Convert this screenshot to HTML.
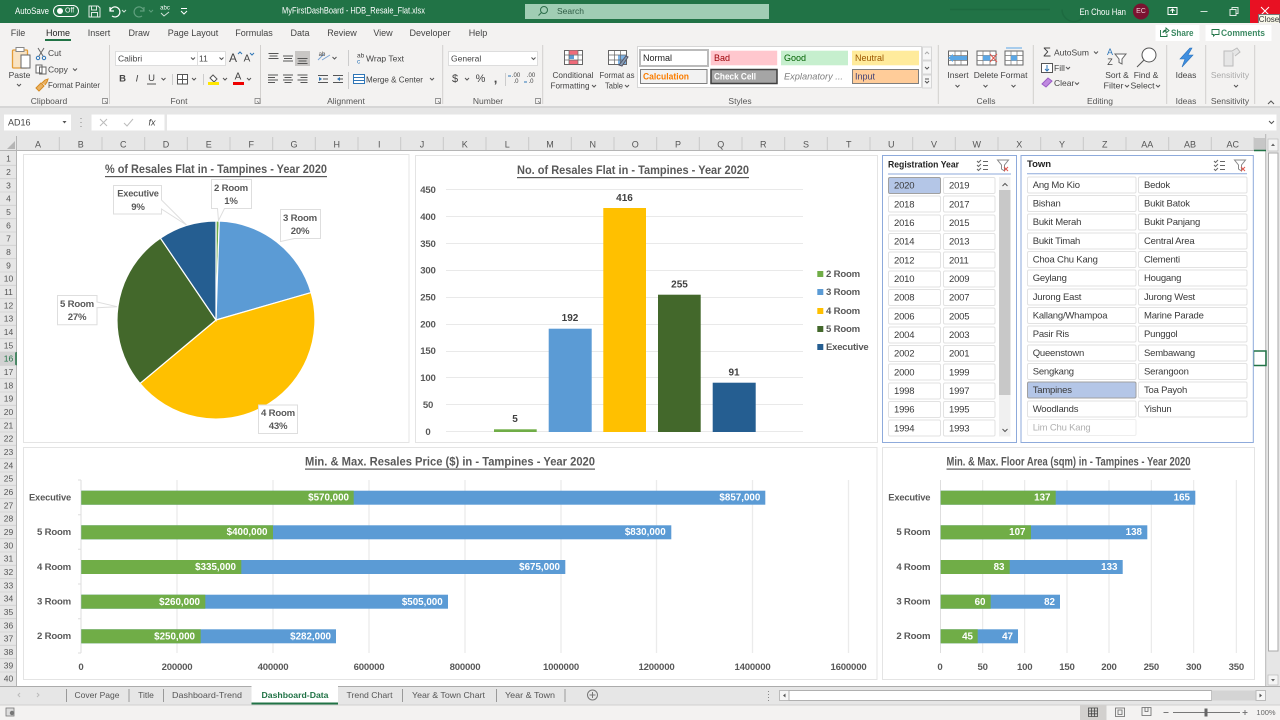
<!DOCTYPE html>
<html lang="en"><head><meta charset="utf-8"><title>MyFirstDashBoard - HDB_Resale_Flat.xlsx</title>
<style>
html,body{margin:0;padding:0;width:1280px;height:720px;overflow:hidden;background:#fff}
svg{display:block}
text{font-family:"Liberation Sans",sans-serif;dominant-baseline:central;font-size:8.5px;fill:#444}
.m{text-anchor:middle}.e{text-anchor:end}
.w{fill:#fff}.b{font-weight:bold}
.t{font-size:12px;font-weight:bold;fill:#595959;text-decoration:underline;text-anchor:middle}
.c{font-size:9.6px;font-weight:bold;fill:#595959;letter-spacing:-.2px;transform:translateY(.6px)}
.v{font-size:10px;font-weight:bold;fill:#404040;text-anchor:middle;transform:translateY(.6px)}
.l{font-size:9.8px;font-weight:bold;fill:#fff;text-anchor:end;transform:translateY(.6px)}
.s{font-size:9.5px;fill:#3a3a3a;letter-spacing:-.2px;transform:translateY(.6px)}
.h{font-size:9px;fill:#555;text-anchor:middle;transform:translateY(.5px)}
.r{font-size:8.5px;fill:#555;text-anchor:middle}
.ic{fill:none;stroke:#555;stroke-width:1}
.sb{fill:#fff;stroke:#e2e2e2;stroke-width:1}
</style></head><body>
<svg width="1280" height="720" viewBox="0 0 1280 720" xmlns="http://www.w3.org/2000/svg">
<!-- title bar -->
<rect width="1280" height="23" fill="#217346"/>
<path d="M950 9.500H1050M1062 9.500a12 12 0 1 0 24 0" fill="none" stroke="#1d6a40" stroke-width="1.500"/>
<text x="15" y="11" class="w" style="font-size:9px" textLength="34" lengthAdjust="spacingAndGlyphs">AutoSave</text>
<rect x="53.500" y="5.500" width="25" height="11" rx="5.500" fill="none" stroke="#fff"/>
<circle cx="60" cy="11" r="3" fill="#fff"/>
<text x="65" y="11" class="w" style="font-size:7px">Off</text>
<path d="M89 6h9l2 2v9H89zM91.500 6v4h5V6M91.500 17v-4.500h6V17" fill="none" stroke="#fff" opacity=".85"/>
<path d="M110 7v4h4M110 11a5 5 0 1 1 2 5" fill="none" stroke="#fff" stroke-width="1.200"/>
<path d="M122 10l2 2 2-2" fill="none" stroke="#fff" opacity=".8"/>
<path d="M144 7v4h-4M144 11a5 5 0 1 0-2 5" fill="none" stroke="#5f9f7d" stroke-width="1.200"/>
<path d="M149 10l2 2 2-2" fill="none" stroke="#5f9f7d"/>
<text x="165" y="8.500" class="w m" style="font-size:6px">abc</text>
<path d="M161 13l3 3 5-4" fill="none" stroke="#fff" opacity=".8"/>
<path d="M181 8.500h6M181 11l3 3 3-3" fill="none" stroke="#fff"/>
<text x="353.500" y="10.500" class="w m" style="font-size:8.800px" textLength="143" lengthAdjust="spacingAndGlyphs">MyFirstDashBoard - HDB_Resale_Flat.xlsx</text>
<rect x="525" y="4" width="244" height="15" fill="#a0cdb4"/>
<circle cx="544" cy="10" r="3.500" fill="none" stroke="#2c6e4a"/><path d="M541.500 12.500l-3 3" stroke="#2c6e4a"/>
<text x="557" y="11" style="font-size:8.500px;fill:#2e5b44">Search</text>
<text x="1079.500" y="12" class="w" style="font-size:8.800px" textLength="46.500" lengthAdjust="spacingAndGlyphs">En Chou Han</text>
<circle cx="1141" cy="11.500" r="8" fill="#7a1230"/><text x="1141" y="11.500" class="m" style="font-size:7px;fill:#eccbd4">EC</text>
<path d="M1168 7.500h9v7h-9zM1172.500 13V9.500M1170.500 11l2-2 2 2" fill="none" stroke="#fff"/>
<path d="M1200.500 11.500h7" stroke="#cfe3d8"/>
<path d="M1230 9.500h6v6h-6zM1232 9.500v-2h6v6h-2" fill="none" stroke="#fff" opacity=".85"/>
<rect x="1250" width="30" height="23" fill="#e81123"/>
<path d="M1261 7l8 8M1269 7l-8 8" stroke="#fff"/>
<rect x="1258.500" y="14.500" width="21" height="9.500" fill="#f7f7e8" stroke="#777"/>
<text x="1269" y="19.500" class="m" style="font-size:8px;fill:#333">Close</text>

<!-- ribbon -->
<rect y="23" width="1280" height="83" fill="#f3f2f1"/>
<rect y="106" width="1280" height="2" fill="#d6d6d6"/>
<rect y="108" width="1280" height="44" fill="#e6e6e6"/>
<g style="font-size:9px">
<text x="18" y="33" class="m" style="font-size:9px">File</text>
<text x="58" y="33" class="m" style="font-size:9px;fill:#222">Home</text>
<text x="99" y="33" class="m" style="font-size:9px">Insert</text>
<text x="139" y="33" class="m" style="font-size:9px">Draw</text>
<text x="193" y="33" class="m" style="font-size:9px">Page Layout</text>
<text x="254" y="33" class="m" style="font-size:9px">Formulas</text>
<text x="300" y="33" class="m" style="font-size:9px">Data</text>
<text x="342" y="33" class="m" style="font-size:9px">Review</text>
<text x="383" y="33" class="m" style="font-size:9px">View</text>
<text x="430" y="33" class="m" style="font-size:9px">Developer</text>
<text x="478" y="33" class="m" style="font-size:9px">Help</text>
</g>
<rect x="45" y="39" width="26" height="2" fill="#217346"/>
<rect x="1155.500" y="25" width="44" height="16" fill="#fff"/>
<path d="M1160.500 30v6.500h6.500v-2.500M1163 33c0-2 1.500-3 3-3v-2l3 2.500-3 2.500v-2c-1.500 0-2.500.500-3 1.500" fill="none" stroke="#217346" stroke-width=".9"/>
<text x="1171" y="33" style="font-size:9px;font-weight:bold;fill:#3d8a63" textLength="22.500" lengthAdjust="spacingAndGlyphs">Share</text>
<rect x="1205.500" y="25" width="66" height="16" fill="#fff"/>
<path d="M1212 29.500h7v5h-4l-1.500 1.500v-1.500H1212z" fill="none" stroke="#217346" stroke-width=".9"/>
<text x="1221" y="33" style="font-size:9px;font-weight:bold;fill:#3d8a63" textLength="44" lengthAdjust="spacingAndGlyphs">Comments</text>
<path d="M109.500 45v59M260.500 45v59M442.700 45v59M542.700 45v59M938.300 45v59M1033.300 45v59M1166.700 45v59M1205.700 45v59M1254.700 45v59" stroke="#d2d0ce"/>
<text x="49" y="101" class="m" style="fill:#555">Clipboard</text>
<text x="179" y="101" class="m" style="fill:#555">Font</text>
<text x="346" y="101" class="m" style="fill:#555">Alignment</text>
<text x="488" y="101" class="m" style="fill:#555">Number</text>
<text x="740" y="101" class="m" style="fill:#555">Styles</text>
<text x="986" y="101" class="m" style="fill:#555">Cells</text>
<text x="1100" y="101" class="m" style="fill:#555">Editing</text>
<text x="1186" y="101" class="m" style="fill:#555">Ideas</text>
<text x="1230" y="101" class="m" style="fill:#555">Sensitivity</text>
<path d="M102.500 98.500h5v5h-5zM105 101l2 2M255 98.500h5v5h-5zM257 101l2 2M435.500 98.500h5v5h-5zM438 101l2 2M535.500 98.500h5v5h-5zM538 101l2 2" fill="none" stroke="#777" stroke-width=".7"/>
<path d="M1268 104l3-3 3 3" fill="none" stroke="#555"/>

<!-- clipboard -->
<rect x="12.500" y="50" width="15" height="18" rx="1" fill="#f9e3c2" stroke="#e39c37" stroke-width="1.300"/>
<rect x="16" y="47.500" width="8" height="4" fill="#fff" stroke="#888"/>
<rect x="21" y="55" width="9" height="13" fill="#fff" stroke="#666"/>
<text x="19.500" y="75" class="m">Paste</text>
<path d="M17 84l2 2 2-2" class="ic"/>
<path d="M38 48l5 8M44 48l-5 8" fill="none" stroke="#666"/><circle cx="38" cy="58" r="1.700" fill="none" stroke="#2e75b6"/><circle cx="44" cy="58" r="1.700" fill="none" stroke="#2e75b6"/>
<text x="48" y="53">Cut</text>
<path d="M36 65h6v8h-6zM39.500 67h6.500v7h-6.500z" fill="#fff" stroke="#666"/>
<text x="48" y="69.500">Copy</text><path d="M73 68.500l2 2 2-2" class="ic"/>
<path d="M36 88l5-5 3 3-5 5zM42 83l3-3 3-1-1 3-2 3" fill="#ebb262" stroke="#d58b22"/>
<text x="48" y="85" textLength="52" lengthAdjust="spacingAndGlyphs">Format Painter</text>

<!-- font -->
<rect x="115.500" y="51.500" width="82" height="14" fill="#fff" stroke="#ddd"/>
<rect x="197.500" y="51.500" width="28" height="14" fill="#fff" stroke="#ddd"/>
<text x="118" y="58.500" style="font-size:8.500px">Calibri</text>
<text x="199" y="58.500" style="font-size:8.500px">11</text>
<path d="M191 57.500l2 2 2-2M219.500 57.500l2 2 2-2" class="ic"/>
<text x="233" y="58" class="m" style="font-size:12px">A</text><path d="M238 54l2-2 2 2" fill="none" stroke="#2e75b6"/>
<text x="247" y="59" class="m" style="font-size:10px">A</text><path d="M250 53l2 2 2-2" fill="none" stroke="#2e75b6"/>
<text x="122.500" y="79" class="m b" style="font-size:9.500px">B</text>
<text x="137" y="79" class="m" style="font-size:9.500px;font-style:italic">I</text>
<text x="151.500" y="78.500" class="m" style="font-size:9.500px">U</text><path d="M147 84h9" stroke="#555"/>
<path d="M161.500 78l2 2 2-2M192 78l2 2 2-2M223 78l2 2 2-2M247 78l2 2 2-2" class="ic"/>
<path d="M172.500 74v11M203.500 74v11" stroke="#ccc"/>
<path d="M177.500 74.500h10v9.500h-10zM182.500 74.500V84M177.500 79.500h10" fill="#fff" stroke="#555"/>
<path d="M210 78l3-3 4 4-3 3z" fill="#fff" stroke="#555"/><rect x="208" y="82" width="11" height="3" fill="#ffe600"/>
<text x="238" y="77" class="m" style="font-size:10px">A</text><rect x="233" y="82" width="11" height="3" fill="#e00"/>

<!-- alignment -->
<rect x="295" y="51" width="15" height="15" fill="#c8c6c4"/>
<path d="M268.500 53.500h10M269.500 56h8M268.500 58.500h10M283 56h10M284 58.500h8M283 61h10M297.500 58.500h10M298.500 61h8M297.500 63.500h10" stroke="#555" fill="none"/>
<path d="M268 75h10M268 77.500h7M268 80h10M268 82.500h7M283 75h10M284.500 77.500h7M283 80h10M284.500 82.500h7M297.500 75h10M300.500 77.500h7M297.500 80h10M300.500 82.500h7" stroke="#555" fill="none"/>
<path d="M318 60l6-6M322 60l8-5" stroke="#7aa4d6" fill="none"/><text x="322" y="55" class="m" style="font-size:6px">ab</text>
<path d="M332.500 57l2 2 2-2M430 78l2 2 2-2" class="ic"/>
<path d="M348.500 50v16M348.500 72v17" stroke="#ccc"/>
<path d="M318 75.500h10M318 82.500h10M333 75.500h10M333 82.500h10M323 79h5M338 79h5" stroke="#555"/>
<path d="M322 79l-3-2v4zM337 79l3-2v4z" fill="#2e75b6"/>
<text x="357" y="56" style="font-size:6.500px">ab</text><text x="357" y="62" style="font-size:6.500px;fill:#2e75b6">c</text>
<text x="366" y="58.500">Wrap Text</text>
<rect x="353.500" y="74.500" width="11" height="9" fill="#fff" stroke="#2e75b6"/><path d="M353.500 77.500h11M353.500 80.500h11" stroke="#2e75b6"/>
<text x="366" y="79.500" textLength="57" lengthAdjust="spacingAndGlyphs">Merge &amp; Center</text>

<!-- number -->
<rect x="448.500" y="51.500" width="89" height="14" fill="#fff" stroke="#ddd"/>
<text x="451" y="58.500">General</text><path d="M531.500 57.500l2 2 2-2" class="ic"/>
<text x="455" y="79" class="m" style="font-size:11px">$</text><path d="M465 78l2 2 2-2" class="ic"/>
<text x="480.500" y="79" class="m" style="font-size:11px">%</text>
<text x="495.500" y="78" class="m b" style="font-size:13px">,</text>
<path d="M505.500 73v13" stroke="#ccc"/>
<text x="516" y="76" class="m" style="font-size:6px">.00</text><text x="516" y="82" class="m" style="font-size:6px">.0</text>
<text x="531" y="76" class="m" style="font-size:6px">.00</text><text x="531" y="82" class="m" style="font-size:6px">.0</text>
<path d="M508 76h3M524 82h3" stroke="#2e75b6"/>

<!-- conditional + table -->
<rect x="564.500" y="50.500" width="18" height="14" fill="#fff" stroke="#666"/>
<rect x="569" y="50.500" width="9" height="4" fill="#ef6b7a"/><rect x="569" y="55" width="5" height="4" fill="#5b9bd5"/><rect x="569" y="60" width="9" height="4" fill="#ef6b7a"/>
<path d="M564.500 55h18M564.500 60h18M569 50.500v14M578 50.500v14" stroke="#666" stroke-width=".7"/>
<text x="573" y="75" class="m" textLength="41" lengthAdjust="spacingAndGlyphs">Conditional</text><text x="570" y="85.500" class="m" textLength="39" lengthAdjust="spacingAndGlyphs">Formatting</text><path d="M592 85l2 2 2-2" class="ic"/>
<rect x="608.500" y="50.500" width="18" height="14" fill="#fff" stroke="#666"/><rect x="618" y="55" width="8" height="9" fill="#7db3e6"/>
<path d="M608.500 55h18M608.500 60h18M614.500 50.500v14M620.500 50.500v14" stroke="#666" stroke-width=".7"/>
<path d="M619 65l7-9 2 1-6 9z" fill="#8a9fb5" stroke="#556"/>
<text x="617" y="75" class="m" textLength="35" lengthAdjust="spacingAndGlyphs">Format as</text><text x="614" y="85.500" class="m" textLength="18" lengthAdjust="spacingAndGlyphs">Table</text><path d="M625 85l2 2 2-2" class="ic"/>

<!-- styles -->
<rect x="637.500" y="46.500" width="284" height="41" fill="#fff" stroke="#d6d6d6"/>
<rect x="640" y="50" width="68" height="16" fill="#fff" stroke="#bbb" stroke-width="2"/>
<text x="643" y="58" style="font-size:9px;fill:#222">Normal</text>
<rect x="710.700" y="50.700" width="66.500" height="14.600" fill="#ffc7ce"/><text x="714" y="58" style="font-size:9px;fill:#9c0006">Bad</text>
<rect x="781" y="50.700" width="67" height="14.600" fill="#c6efce"/><text x="784" y="58" style="font-size:9px;fill:#006100">Good</text>
<rect x="852" y="50.700" width="67" height="14.600" fill="#ffeb9c"/><text x="855" y="58" style="font-size:9px;fill:#9c5700">Neutral</text>
<rect x="640.500" y="69.500" width="66.500" height="14" fill="#f2f2f2" stroke="#7f7f7f"/><text x="643" y="76.500" class="b" style="font-size:9px;fill:#fa7d00" textLength="46" lengthAdjust="spacingAndGlyphs">Calculation</text>
<rect x="711" y="69.500" width="66" height="14" fill="#a5a5a5" stroke="#3f3f3f" stroke-width="1.500"/><text x="714" y="76.500" class="b w" style="font-size:9px" textLength="42" lengthAdjust="spacingAndGlyphs">Check Cell</text>
<text x="784" y="76.500" style="font-size:9px;font-style:italic;fill:#7f7f7f" textLength="59" lengthAdjust="spacingAndGlyphs">Explanatory ...</text>
<rect x="852.500" y="69.500" width="66" height="14" fill="#ffcc99" stroke="#7f7f7f"/><text x="855" y="76.500" style="font-size:9px;fill:#3f3f76">Input</text>
<path d="M922.500 47h9v13h-9zM922.500 61h9v13h-9zM922.500 75h9v13h-9z" fill="#f6f6f6" stroke="#d6d6d6"/>
<path d="M925 54l2-2 2 2" fill="none" stroke="#aaa"/><path d="M925 67l2 2 2-2" fill="none" stroke="#555"/><path d="M925 79h4M925 81l2 2 2-2" fill="none" stroke="#555"/>

<!-- cells -->
<g fill="#fff" stroke="#666"><rect x="948.500" y="51" width="19" height="14"/><rect x="977" y="51" width="19" height="14"/><rect x="1005" y="51" width="18" height="14"/></g>
<path d="M948.500 55.500h19M948.500 60.500h19M955 51v14M961 51v14M977 55.500h19M977 60.500h19M983 51v14M990 51v14M1005 55.500h18M1005 60.500h18M1011 51v14M1017 51v14" stroke="#777" stroke-width=".7"/>
<path d="M948 58l5-4v2h14v4h-14v2z" fill="#5ba7e6"/><rect x="983" y="55.500" width="7" height="5" fill="#5ba7e6"/><path d="M990 54l7 8M997 54l-7 8" stroke="#e0564c"/>
<rect x="1011" y="55.500" width="6" height="5" fill="#5ba7e6"/><path d="M1006 48h16" stroke="#5ba7e6"/>
<text x="958" y="75" class="m">Insert</text><text x="986" y="75" class="m">Delete</text><text x="1014" y="75" class="m">Format</text>
<path d="M955.500 85l2 2 2-2M983.500 85l2 2 2-2M1011.500 85l2 2 2-2M1234 85l2 2 2-2" class="ic"/>

<!-- editing -->
<text x="1047" y="52" class="m" style="font-size:13px">Σ</text>
<text x="1054" y="52.500">AutoSum</text><path d="M1094 51.500l2 2 2-2" class="ic"/>
<rect x="1041.500" y="63.500" width="11" height="9" fill="#fff" stroke="#555"/><path d="M1047 65v6M1045 69l2 2 2-2" fill="none" stroke="#2e75b6"/>
<text x="1054" y="68">Fill</text><path d="M1066 67l2 2 2-2" class="ic"/>
<path d="M1042 84l6-6 4 3-6 6z" fill="#c08ae0" stroke="#9a5cc5"/>
<text x="1054" y="83">Clear</text><path d="M1075 82.500l2 2 2-2" class="ic"/>
<text x="1110" y="52" class="m" style="font-size:9px;fill:#2e75b6">A</text><text x="1110" y="62" class="m" style="font-size:9px">Z</text>
<path d="M1115 54h11l-4 5v5l-3-1.500V59z" fill="#fff" stroke="#666"/>
<text x="1117" y="75" class="m">Sort &amp;</text><text x="1113.500" y="85.500" class="m" textLength="20" lengthAdjust="spacingAndGlyphs">Filter</text><path d="M1125 85l2 2 2-2" class="ic"/>
<circle cx="1149" cy="55" r="7" fill="#fff" stroke="#555"/><path d="M1144 60l-7 7" stroke="#555"/>
<text x="1146" y="75" class="m">Find &amp;</text><text x="1142.500" y="85.500" class="m" textLength="24" lengthAdjust="spacingAndGlyphs">Select</text><path d="M1156 85l2 2 2-2" class="ic"/>
<path d="M1190 48l-10 11h5l-3 8 11-12h-5l4-7z" fill="#3f8fe0" stroke="#2a72bd" stroke-width=".6"/>
<text x="1186" y="75" class="m">Ideas</text>
<path d="M1224 51h9v15h-9z" fill="#e6e6e6" stroke="#bbb"/><path d="M1232 51l5-3 3 4-5 4" fill="#e6e6e6" stroke="#bbb"/>
<text x="1230" y="75" class="m" style="fill:#aaa">Sensitivity</text>

<!-- formula bar -->
<rect x="4" y="114.500" width="67" height="16" fill="#fff"/>
<text x="8" y="122.500" style="font-size:9px">AD16</text><path d="M62.500 121h4l-2 2.500z" fill="#555"/>
<path d="M81 118v1M81 122v1M81 126v1" stroke="#888"/>
<rect x="91.500" y="114.500" width="73" height="16" fill="#fff"/>
<path d="M100 119l7 7M107 119l-7 7" stroke="#bbb"/><path d="M124 123l3 3 6-7" fill="none" stroke="#bbb"/>
<text x="152" y="122.500" class="m" style="font-size:9px;font-style:italic">fx</text>
<rect x="167" y="114.500" width="1109.500" height="16" fill="#fff"/>
<path d="M1269 121l2.500 2.500 2.500-2.500" class="ic"/>

<!-- sheet -->
<rect x="17" y="151" width="1249" height="535" fill="#fff"/>
<rect y="151" width="17" height="535" fill="#e6e6e6"/>
<rect x="1266" y="134" width="14" height="552" fill="#e6e6e6"/>
<path d="M0 150.500H1266" stroke="#b5b5b5"/>
<path d="M16.500 136V686M1265.700 134V686" stroke="#b5b5b5"/>
<path d="M15 141v8h-8z" fill="#b5b5b5"/>
<path d="M59.300 137v13M102 137v13M144.700 137v13M187.300 137v13M230 137v13M272.700 137v13M315.300 137v13M358 137v13M400.700 137v13M443.300 137v13M486 137v13M528.700 137v13M571.300 137v13M614 137v13M656.700 137v13M699.300 137v13M742 137v13M784.700 137v13M827.300 137v13M870 137v13M912.700 137v13M955.300 137v13M998 137v13M1040.700 137v13M1083.300 137v13M1126 137v13M1168.700 137v13M1211.300 137v13M1254 137v13" stroke="#c9c9c9"/>
<g>
<text x="38" y="144" class="h">A</text><text x="80.700" y="144" class="h">B</text><text x="123.300" y="144" class="h">C</text><text x="166" y="144" class="h">D</text><text x="208.700" y="144" class="h">E</text><text x="251.300" y="144" class="h">F</text><text x="294" y="144" class="h">G</text><text x="336.700" y="144" class="h">H</text><text x="379.300" y="144" class="h">I</text><text x="422" y="144" class="h">J</text><text x="464.700" y="144" class="h">K</text><text x="507.300" y="144" class="h">L</text><text x="550" y="144" class="h">M</text><text x="592.700" y="144" class="h">N</text><text x="635.300" y="144" class="h">O</text><text x="678" y="144" class="h">P</text><text x="720.700" y="144" class="h">Q</text><text x="763.300" y="144" class="h">R</text><text x="806" y="144" class="h">S</text><text x="848.700" y="144" class="h">T</text><text x="891.300" y="144" class="h">U</text><text x="934" y="144" class="h">V</text><text x="976.700" y="144" class="h">W</text><text x="1019.300" y="144" class="h">X</text><text x="1062" y="144" class="h">Y</text><text x="1104.700" y="144" class="h">Z</text><text x="1147.300" y="144" class="h">AA</text><text x="1190" y="144" class="h">AB</text><text x="1232.700" y="144" class="h">AC</text>
</g>
<rect x="1254.300" y="138" width="11" height="12" fill="#c6c6c6"/><path d="M1254 150.500h12" stroke="#217346" stroke-width="1.500"/>
<rect y="352" width="16" height="13.300" fill="#d2d2d2"/><path d="M16 352v13.300" stroke="#217346" stroke-width="1.500"/>
<path d="M0 165.300h16M0 178.700h16M0 192h16M0 205.300h16M0 218.700h16M0 232h16M0 245.300h16M0 258.700h16M0 272h16M0 285.300h16M0 298.700h16M0 312h16M0 325.300h16M0 338.700h16M0 352h16M0 365.300h16M0 378.700h16M0 392h16M0 405.300h16M0 418.700h16M0 432h16M0 445.300h16M0 458.700h16M0 472h16M0 485.300h16M0 498.700h16M0 512h16M0 525.300h16M0 538.700h16M0 552h16M0 565.300h16M0 578.700h16M0 592h16M0 605.300h16M0 618.700h16M0 632h16M0 645.300h16M0 658.700h16M0 672h16" stroke="#cfcfcf" stroke-width=".8"/>
<g>
<text x="8.500" y="158.700" class="r">1</text><text x="8.500" y="172" class="r">2</text><text x="8.500" y="185.300" class="r">3</text><text x="8.500" y="198.700" class="r">4</text><text x="8.500" y="212" class="r">5</text><text x="8.500" y="225.300" class="r">6</text><text x="8.500" y="238.700" class="r">7</text><text x="8.500" y="252" class="r">8</text><text x="8.500" y="265.300" class="r">9</text><text x="8.500" y="278.700" class="r">10</text><text x="8.500" y="292" class="r">11</text><text x="8.500" y="305.300" class="r">12</text><text x="8.500" y="318.700" class="r">13</text><text x="8.500" y="332" class="r">14</text><text x="8.500" y="345.300" class="r">15</text><text x="8.500" y="358.700" class="r" style="fill:#217346">16</text><text x="8.500" y="372" class="r">17</text><text x="8.500" y="385.300" class="r">18</text><text x="8.500" y="398.700" class="r">19</text><text x="8.500" y="412" class="r">20</text><text x="8.500" y="425.300" class="r">21</text><text x="8.500" y="438.700" class="r">22</text><text x="8.500" y="452" class="r">23</text><text x="8.500" y="465.300" class="r">24</text><text x="8.500" y="478.700" class="r">25</text><text x="8.500" y="492" class="r">26</text><text x="8.500" y="505.300" class="r">27</text><text x="8.500" y="518.700" class="r">28</text><text x="8.500" y="532" class="r">29</text><text x="8.500" y="545.300" class="r">30</text><text x="8.500" y="558.700" class="r">31</text><text x="8.500" y="572" class="r">32</text><text x="8.500" y="585.300" class="r">33</text><text x="8.500" y="598.700" class="r">34</text><text x="8.500" y="612" class="r">35</text><text x="8.500" y="625.300" class="r">36</text><text x="8.500" y="638.700" class="r">37</text><text x="8.500" y="652" class="r">38</text><text x="8.500" y="665.300" class="r">39</text><text x="8.500" y="678.700" class="r">40</text>
</g>
<rect x="1253.500" y="351" width="12.500" height="14.500" fill="none" stroke="#217346" stroke-width="1.500"/>

<!-- vertical scrollbar -->
<rect x="1268" y="139" width="10" height="12" fill="#f4f4f4" stroke="#bbb" stroke-width=".7"/><path d="M1271 146l2-2.500 2 2.500z" fill="#666"/>
<rect x="1268.500" y="153" width="9.500" height="498" fill="#fff" stroke="#aaa"/>
<rect x="1268" y="675" width="10" height="10" fill="#f4f4f4" stroke="#bbb" stroke-width=".7"/><path d="M1271 679l2 2.500 2-2.500z" fill="#666"/>

<!-- chart frames -->
<g fill="#fff" stroke="#e4e4e4">
<rect x="23.500" y="154.500" width="385.500" height="288"/>
<rect x="415.500" y="155.500" width="462" height="287"/>
<rect x="23.500" y="447.500" width="853.500" height="232"/>
<rect x="882.500" y="447.500" width="372" height="232"/>
</g>

<!-- pie -->
<text x="216" y="169" class="t" textLength="222" lengthAdjust="spacingAndGlyphs">% of Resales Flat in - Tampines - Year 2020</text>
<g stroke="#fff" stroke-width="1.200">
<path d="M216 320L216 221A99 99 0 0 1 219.250 221.050Z" fill="#70ad47"/>
<path d="M216 320L219.250 221.050A99 99 0 0 1 311.100 292.600Z" fill="#5b9bd5"/>
<path d="M216 320L311.100 292.600A99 99 0 0 1 140 383.500Z" fill="#ffc000"/>
<path d="M216 320L140 383.500A99 99 0 0 1 160.400 238.100Z" fill="#43682b"/>
<path d="M216 320L160.400 238.100A99 99 0 0 1 216 221Z" fill="#255e91"/>
</g>
<g fill="#fff" stroke="#dedede">
<path d="M113.500 185.500h48v14.500l25 25-25-16v5h-48z"/>
<path d="M211.500 179.500h40v29h-27l-6 12-1-12h-6z"/>
<path d="M280.500 209.500h40v29h-26l-14 3z"/>
<path d="M57.500 295.500h39.500v6.500l20 4.700-20 1v17h-39.500z"/>
<rect x="258.500" y="405" width="39" height="28.500"/>
</g>
<text x="138" y="193.500" class="c m" textLength="41.500" lengthAdjust="spacingAndGlyphs">Executive</text><text x="138" y="207" class="c m">9%</text>
<text x="231" y="188" class="c m">2 Room</text><text x="231" y="201" class="c m">1%</text>
<text x="300" y="218" class="c m">3 Room</text><text x="300" y="231" class="c m">20%</text>
<text x="77" y="304" class="c m">5 Room</text><text x="77" y="317" class="c m">27%</text>
<text x="278" y="413" class="c m">4 Room</text><text x="278" y="426" class="c m">43%</text>

<!-- column chart -->
<text x="633" y="170" class="t" textLength="232" lengthAdjust="spacingAndGlyphs">No. of Resales Flat in - Tampines - Year 2020</text>
<path d="M446 189.500H803M446 216.500H803M446 243.500H803M446 270.500H803M446 297.500H803M446 324.500H803M446 351.500H803M446 377.500H803M446 404.500H803M446 431.500H803" stroke="#e9e9e9"/>
<g class="c">
<text x="428" y="189.300" class="c m">450</text><text x="428" y="216.500" class="c m">400</text><text x="428" y="243.300" class="c m">350</text><text x="428" y="270" class="c m">300</text><text x="428" y="297" class="c m">250</text><text x="428" y="324" class="c m">200</text><text x="428" y="350.500" class="c m">150</text><text x="428" y="377.500" class="c m">100</text><text x="428" y="404.500" class="c m">50</text><text x="428" y="431.300" class="c m">0</text>
</g>
<rect x="494" y="429.300" width="42.700" height="2.700" fill="#70ad47"/>
<rect x="548.700" y="328.700" width="43" height="103.300" fill="#5b9bd5"/>
<rect x="603.300" y="208" width="42.700" height="224" fill="#ffc000"/>
<rect x="658" y="294.700" width="42.700" height="137.300" fill="#43682b"/>
<rect x="712.700" y="382.700" width="43" height="49.300" fill="#255e91"/>
<text x="515" y="419" class="v">5</text><text x="570" y="318" class="v">192</text><text x="624.500" y="198" class="v">416</text><text x="679.500" y="284.500" class="v">255</text><text x="734" y="372.500" class="v">91</text>
<rect x="817.300" y="271" width="6" height="6" fill="#70ad47"/><rect x="817.300" y="289" width="6" height="6" fill="#5b9bd5"/><rect x="817.300" y="308" width="6" height="6" fill="#ffc000"/><rect x="817.300" y="326" width="6" height="6" fill="#43682b"/><rect x="817.300" y="344" width="6" height="6" fill="#255e91"/>
<text x="826" y="274" class="c">2 Room</text><text x="826" y="292" class="c">3 Room</text><text x="826" y="311" class="c">4 Room</text><text x="826" y="329" class="c">5 Room</text><text x="826" y="347" class="c" textLength="42.500" lengthAdjust="spacingAndGlyphs">Executive</text>

<!-- year slicer -->
<rect x="882.500" y="155.500" width="134" height="287" fill="#fff" stroke="#8eaadb"/>
<text x="888" y="165" class="b" style="font-size:9.500px;fill:#222" textLength="71" lengthAdjust="spacingAndGlyphs">Registration Year</text>
<path d="M977 161l1.500 1.500 2.500-2.500M977 165l1.500 1.500 2.500-2.500M977 169l1.500 1.500 2.500-2.500M983 161.500h5M983 165.500h5M983 169.500h5" fill="none" stroke="#666"/>
<path d="M997.500 160h11l-4 5v6l-3-2v-4z" fill="#fff" stroke="#888"/><path d="M1004 167l4 4M1008 167l-4 4" stroke="#e0564c"/>
<path d="M888 174h123" stroke="#8eaadb"/>
<rect x="999" y="177" width="11.500" height="259.500" fill="#f0f0f0"/><rect x="999" y="190" width="11.500" height="205" fill="#c8c8c8"/>
<path d="M1002.500 186l2.500-2.500 2.500 2.500M1002.500 429l2.500 2.500 2.500-2.500" fill="none" stroke="#555"/>
<g class="sb">
<rect x="888.500" y="177.500" width="52" height="16" rx="1.500" fill="#b4c6e7" stroke="#a0a0a0"/><rect x="943.500" y="177.500" width="51.500" height="16" rx="1.500"/>
<rect x="888.500" y="196" width="52" height="16" rx="1.500"/><rect x="943.500" y="196" width="51.500" height="16" rx="1.500"/>
<rect x="888.500" y="215" width="52" height="16" rx="1.500"/><rect x="943.500" y="215" width="51.500" height="16" rx="1.500"/>
<rect x="888.500" y="233.500" width="52" height="16" rx="1.500"/><rect x="943.500" y="233.500" width="51.500" height="16" rx="1.500"/>
<rect x="888.500" y="252" width="52" height="16" rx="1.500"/><rect x="943.500" y="252" width="51.500" height="16" rx="1.500"/>
<rect x="888.500" y="271" width="52" height="16" rx="1.500"/><rect x="943.500" y="271" width="51.500" height="16" rx="1.500"/>
<rect x="888.500" y="289.500" width="52" height="16" rx="1.500"/><rect x="943.500" y="289.500" width="51.500" height="16" rx="1.500"/>
<rect x="888.500" y="308" width="52" height="16" rx="1.500"/><rect x="943.500" y="308" width="51.500" height="16" rx="1.500"/>
<rect x="888.500" y="327" width="52" height="16" rx="1.500"/><rect x="943.500" y="327" width="51.500" height="16" rx="1.500"/>
<rect x="888.500" y="345.500" width="52" height="16" rx="1.500"/><rect x="943.500" y="345.500" width="51.500" height="16" rx="1.500"/>
<rect x="888.500" y="364" width="52" height="16" rx="1.500"/><rect x="943.500" y="364" width="51.500" height="16" rx="1.500"/>
<rect x="888.500" y="383" width="52" height="16" rx="1.500"/><rect x="943.500" y="383" width="51.500" height="16" rx="1.500"/>
<rect x="888.500" y="401.500" width="52" height="16" rx="1.500"/><rect x="943.500" y="401.500" width="51.500" height="16" rx="1.500"/>
<rect x="888.500" y="420" width="52" height="16" rx="1.500"/><rect x="943.500" y="420" width="51.500" height="16" rx="1.500"/>
</g>
<text x="894" y="185.500" class="s">2020</text><text x="949" y="185.500" class="s">2019</text>
<text x="894" y="204.300" class="s">2018</text><text x="949" y="204.300" class="s">2017</text>
<text x="894" y="223" class="s">2016</text><text x="949" y="223" class="s">2015</text>
<text x="894" y="241.600" class="s">2014</text><text x="949" y="241.600" class="s">2013</text>
<text x="894" y="260.300" class="s">2012</text><text x="949" y="260.300" class="s">2011</text>
<text x="894" y="279" class="s">2010</text><text x="949" y="279" class="s">2009</text>
<text x="894" y="297.600" class="s">2008</text><text x="949" y="297.600" class="s">2007</text>
<text x="894" y="316.300" class="s">2006</text><text x="949" y="316.300" class="s">2005</text>
<text x="894" y="335" class="s">2004</text><text x="949" y="335" class="s">2003</text>
<text x="894" y="353.600" class="s">2002</text><text x="949" y="353.600" class="s">2001</text>
<text x="894" y="372.300" class="s">2000</text><text x="949" y="372.300" class="s">1999</text>
<text x="894" y="391" class="s">1998</text><text x="949" y="391" class="s">1997</text>
<text x="894" y="409.600" class="s">1996</text><text x="949" y="409.600" class="s">1995</text>
<text x="894" y="428.300" class="s">1994</text><text x="949" y="428.300" class="s">1993</text>

<!-- town slicer -->
<rect x="1021" y="155.500" width="232.300" height="287" fill="#fff" stroke="#8eaadb"/>
<text x="1027" y="164.500" class="b" style="font-size:9.500px;fill:#222">Town</text>
<path d="M1214 161l1.500 1.500 2.500-2.500M1214 165l1.500 1.500 2.500-2.500M1214 169l1.500 1.500 2.500-2.500M1220 161.500h5M1220 165.500h5M1220 169.500h5" fill="none" stroke="#666"/>
<path d="M1234.500 160h11l-4 5v6l-3-2v-4z" fill="#fff" stroke="#888"/><path d="M1241 167l4 4M1245 167l-4 4" stroke="#e0564c"/>
<path d="M1027 173.700h220" stroke="#8eaadb"/>
<g class="sb">
<rect x="1027.500" y="177" width="108.500" height="16" rx="1.500"/><rect x="1138.500" y="177" width="108.500" height="16" rx="1.500"/>
<rect x="1027.500" y="195.500" width="108.500" height="16" rx="1.500"/><rect x="1138.500" y="195.500" width="108.500" height="16" rx="1.500"/>
<rect x="1027.500" y="214" width="108.500" height="16" rx="1.500"/><rect x="1138.500" y="214" width="108.500" height="16" rx="1.500"/>
<rect x="1027.500" y="233" width="108.500" height="16" rx="1.500"/><rect x="1138.500" y="233" width="108.500" height="16" rx="1.500"/>
<rect x="1027.500" y="251.500" width="108.500" height="16" rx="1.500"/><rect x="1138.500" y="251.500" width="108.500" height="16" rx="1.500"/>
<rect x="1027.500" y="270" width="108.500" height="16" rx="1.500"/><rect x="1138.500" y="270" width="108.500" height="16" rx="1.500"/>
<rect x="1027.500" y="289" width="108.500" height="16" rx="1.500"/><rect x="1138.500" y="289" width="108.500" height="16" rx="1.500"/>
<rect x="1027.500" y="307.500" width="108.500" height="16" rx="1.500"/><rect x="1138.500" y="307.500" width="108.500" height="16" rx="1.500"/>
<rect x="1027.500" y="326" width="108.500" height="16" rx="1.500"/><rect x="1138.500" y="326" width="108.500" height="16" rx="1.500"/>
<rect x="1027.500" y="345" width="108.500" height="16" rx="1.500"/><rect x="1138.500" y="345" width="108.500" height="16" rx="1.500"/>
<rect x="1027.500" y="363.500" width="108.500" height="16" rx="1.500"/><rect x="1138.500" y="363.500" width="108.500" height="16" rx="1.500"/>
<rect x="1027.500" y="382" width="108.500" height="16" rx="1.500" fill="#b4c6e7" stroke="#a0a0a0"/><rect x="1138.500" y="382" width="108.500" height="16" rx="1.500"/>
<rect x="1027.500" y="401" width="108.500" height="16" rx="1.500"/><rect x="1138.500" y="401" width="108.500" height="16" rx="1.500"/>
<rect x="1027.500" y="419.500" width="108.500" height="16" rx="1.500" stroke="#eee"/>
</g>
<text x="1032.700" y="185" class="s">Ang Mo Kio</text><text x="1144" y="185" class="s">Bedok</text>
<text x="1032.700" y="203.500" class="s">Bishan</text><text x="1144" y="203.500" class="s">Bukit Batok</text>
<text x="1032.700" y="222" class="s">Bukit Merah</text><text x="1144" y="222" class="s">Bukit Panjang</text>
<text x="1032.700" y="241" class="s">Bukit Timah</text><text x="1144" y="241" class="s">Central Area</text>
<text x="1032.700" y="259.500" class="s">Choa Chu Kang</text><text x="1144" y="259.500" class="s">Clementi</text>
<text x="1032.700" y="278" class="s">Geylang</text><text x="1144" y="278" class="s">Hougang</text>
<text x="1032.700" y="297" class="s">Jurong East</text><text x="1144" y="297" class="s">Jurong West</text>
<text x="1032.700" y="315.500" class="s">Kallang/Whampoa</text><text x="1144" y="315.500" class="s">Marine Parade</text>
<text x="1032.700" y="334" class="s">Pasir Ris</text><text x="1144" y="334" class="s">Punggol</text>
<text x="1032.700" y="353" class="s">Queenstown</text><text x="1144" y="353" class="s">Sembawang</text>
<text x="1032.700" y="371.500" class="s">Sengkang</text><text x="1144" y="371.500" class="s">Serangoon</text>
<text x="1032.700" y="390" class="s">Tampines</text><text x="1144" y="390" class="s">Toa Payoh</text>
<text x="1032.700" y="409" class="s">Woodlands</text><text x="1144" y="409" class="s">Yishun</text>
<text x="1032.700" y="427.500" class="s" style="fill:#b0b0b0">Lim Chu Kang</text>

<!-- price chart -->
<text x="450" y="461.500" class="t" textLength="290" lengthAdjust="spacingAndGlyphs">Min. &amp; Max. Resales Price ($) in - Tampines - Year 2020</text>
<path d="M177 480V653M273 480V653M369 480V653M465 480V653M561 480V653M656.500 480V653M752.500 480V653M848.500 480V653" stroke="#ebebeb" stroke-width="1.300"/>
<path d="M81 480V653M78 480h3M78 514.700h3M78 549.300h3M78 584h3M78 618.700h3M78 653h3" stroke="#dedede" fill="none"/>
<rect x="81.300" y="490.700" width="684" height="14" fill="#5b9bd5"/><rect x="81.300" y="490.700" width="272.400" height="14" fill="#70ad47"/>
<rect x="81.300" y="525.300" width="590" height="14" fill="#5b9bd5"/><rect x="81.300" y="525.300" width="191.700" height="14" fill="#70ad47"/>
<rect x="81.300" y="560" width="484" height="14" fill="#5b9bd5"/><rect x="81.300" y="560" width="160" height="14" fill="#70ad47"/>
<rect x="81.300" y="594.700" width="366.700" height="14" fill="#5b9bd5"/><rect x="81.300" y="594.700" width="124" height="14" fill="#70ad47"/>
<rect x="81.300" y="629.300" width="254.700" height="14" fill="#5b9bd5"/><rect x="81.300" y="629.300" width="119.400" height="14" fill="#70ad47"/>
<text x="349" y="497.500" class="l">$570,000</text><text x="760.300" y="497.500" class="l">$857,000</text>
<text x="267.500" y="532" class="l">$400,000</text><text x="665.700" y="532" class="l">$830,000</text>
<text x="236" y="567" class="l">$335,000</text><text x="560" y="567" class="l">$675,000</text>
<text x="200" y="602" class="l">$260,000</text><text x="442.700" y="602" class="l">$505,000</text>
<text x="195" y="636.500" class="l">$250,000</text><text x="331" y="636.500" class="l">$282,000</text>
<text x="71" y="497.500" class="c e" textLength="42" lengthAdjust="spacingAndGlyphs">Executive</text><text x="71" y="532" class="c e">5 Room</text><text x="71" y="566.700" class="c e">4 Room</text><text x="71" y="601.500" class="c e">3 Room</text><text x="71" y="636" class="c e">2 Room</text>
<text x="81" y="667" class="c m">0</text><text x="177" y="667" class="c m">200000</text><text x="273" y="667" class="c m">400000</text><text x="369" y="667" class="c m">600000</text><text x="465" y="667" class="c m">800000</text><text x="561" y="667" class="c m">1000000</text><text x="656.500" y="667" class="c m">1200000</text><text x="752.500" y="667" class="c m">1400000</text><text x="848.500" y="667" class="c m">1600000</text>

<!-- area chart -->
<text x="1068.500" y="461.500" class="t" textLength="244" lengthAdjust="spacingAndGlyphs">Min. &amp; Max. Floor Area (sqm) in - Tampines - Year 2020</text>
<path d="M982.700 480V653M1024.700 480V653M1067 480V653M1109 480V653M1151.300 480V653M1193.700 480V653M1236.300 480V653" stroke="#e6e6e6"/>
<path d="M940.500 480V653" stroke="#dedede"/>
<rect x="940.700" y="490.700" width="254.600" height="14" fill="#5b9bd5"/><rect x="940.700" y="490.700" width="115" height="14" fill="#70ad47"/>
<rect x="940.700" y="525.300" width="206.600" height="14" fill="#5b9bd5"/><rect x="940.700" y="525.300" width="90.300" height="14" fill="#70ad47"/>
<rect x="940.700" y="560" width="182" height="14" fill="#5b9bd5"/><rect x="940.700" y="560" width="69" height="14" fill="#70ad47"/>
<rect x="940.700" y="594.700" width="119.300" height="14" fill="#5b9bd5"/><rect x="940.700" y="594.700" width="50" height="14" fill="#70ad47"/>
<rect x="940.700" y="629.300" width="77.300" height="14" fill="#5b9bd5"/><rect x="940.700" y="629.300" width="37" height="14" fill="#70ad47"/>
<text x="1050.500" y="497.500" class="l">137</text><text x="1190" y="497.500" class="l">165</text>
<text x="1025.500" y="532" class="l">107</text><text x="1142" y="532" class="l">138</text>
<text x="1004.500" y="567" class="l">83</text><text x="1117.500" y="567" class="l">133</text>
<text x="985.500" y="602" class="l">60</text><text x="1055" y="602" class="l">82</text>
<text x="973" y="636.500" class="l">45</text><text x="1013" y="636.500" class="l">47</text>
<text x="930.300" y="497.500" class="c e" textLength="42" lengthAdjust="spacingAndGlyphs">Executive</text><text x="930.300" y="532" class="c e">5 Room</text><text x="930.300" y="566.700" class="c e">4 Room</text><text x="930.300" y="601.500" class="c e">3 Room</text><text x="930.300" y="636" class="c e">2 Room</text>
<text x="940" y="667" class="c m">0</text><text x="982.700" y="667" class="c m">50</text><text x="1024.700" y="667" class="c m">100</text><text x="1067" y="667" class="c m">150</text><text x="1109" y="667" class="c m">200</text><text x="1151.300" y="667" class="c m">250</text><text x="1193.700" y="667" class="c m">300</text><text x="1236.300" y="667" class="c m">350</text>

<!-- tab bar -->
<rect y="686" width="1280" height="19" fill="#e6e6e6"/>
<path d="M0 686.500H1280" stroke="#ababab"/>
<rect x="251.500" y="686" width="86.500" height="18" fill="#fff"/>
<rect x="251.500" y="702.500" width="86.500" height="2" fill="#217346"/>
<path d="M66.500 689v13M129 689v13M163.500 689v13M402.500 689v13M496.500 689v13M565 689v13" stroke="#999"/>
<path d="M20 693l-2 2 2 2M37 693l2 2-2 2" fill="none" stroke="#bbb"/>
<text x="97" y="695" class="m" style="fill:#555" textLength="45" lengthAdjust="spacingAndGlyphs">Cover Page</text>
<text x="146" y="695" class="m" style="fill:#555">Title</text>
<text x="207" y="695" class="m" style="fill:#555" textLength="70" lengthAdjust="spacingAndGlyphs">Dashboard-Trend</text>
<text x="295" y="695" class="m b" style="fill:#217346" textLength="67" lengthAdjust="spacingAndGlyphs">Dashboard-Data</text>
<text x="369.500" y="695" class="m" style="fill:#555" textLength="46" lengthAdjust="spacingAndGlyphs">Trend Chart</text>
<text x="448.500" y="695" class="m" style="fill:#555" textLength="73" lengthAdjust="spacingAndGlyphs">Year &amp; Town Chart</text>
<text x="530" y="695" class="m" style="fill:#555" textLength="50" lengthAdjust="spacingAndGlyphs">Year &amp; Town</text>
<circle cx="592.500" cy="695" r="5" fill="none" stroke="#777"/><path d="M589.500 695h6M592.500 692v6" stroke="#777"/>
<path d="M768.500 691v1M768.500 694v1M768.500 697v1M768.500 700v1" stroke="#888"/>
<rect x="779.500" y="690.500" width="9.500" height="10" fill="#f6f6f6" stroke="#bbb"/><path d="M785.500 693.500l-2.500 2 2.500 2z" fill="#555"/>
<rect x="789" y="690.500" width="422.500" height="10" fill="#fff" stroke="#b0b0b0"/>
<rect x="1211.500" y="690.500" width="44.500" height="10" fill="#d4d4d4"/>
<rect x="1256" y="690.500" width="9.500" height="10" fill="#f6f6f6" stroke="#bbb"/><path d="M1259.500 693.500l2.500 2-2.500 2z" fill="#555"/>

<!-- status bar -->
<rect y="705" width="1280" height="15" fill="#f3f2f1"/>
<path d="M0 705H1280" stroke="#d0d0d0"/>
<rect x="6" y="708" width="8" height="8" fill="#ddd" stroke="#777" stroke-width=".8"/><circle cx="12" cy="713" r="2.200" fill="#777"/>
<rect x="1080" y="705" width="26.500" height="15" fill="#d2d0ce"/>
<path d="M1088.500 708h9v8.500h-9zM1088.500 711h9M1088.500 713.800h9M1091.500 708v8.500M1094.500 708v8.500" fill="none" stroke="#444" stroke-width=".8"/>
<path d="M1115.500 708h9v8.500h-9zM1118 710h4v4.500h-4z" fill="none" stroke="#666" stroke-width=".8"/>
<path d="M1142 707.500h9v8h-9zM1145 707.500v4h3v-4" fill="none" stroke="#666" stroke-width=".8"/>
<path d="M1163.500 712.500h5M1173 712.500h67M1242.500 712.500h5M1245 710v5" stroke="#777"/>
<rect x="1204.500" y="708.500" width="3" height="8" fill="#666"/>
<text x="1266" y="712.500" class="m" style="font-size:7.500px;fill:#666">100%</text>
</svg>
</body></html>
